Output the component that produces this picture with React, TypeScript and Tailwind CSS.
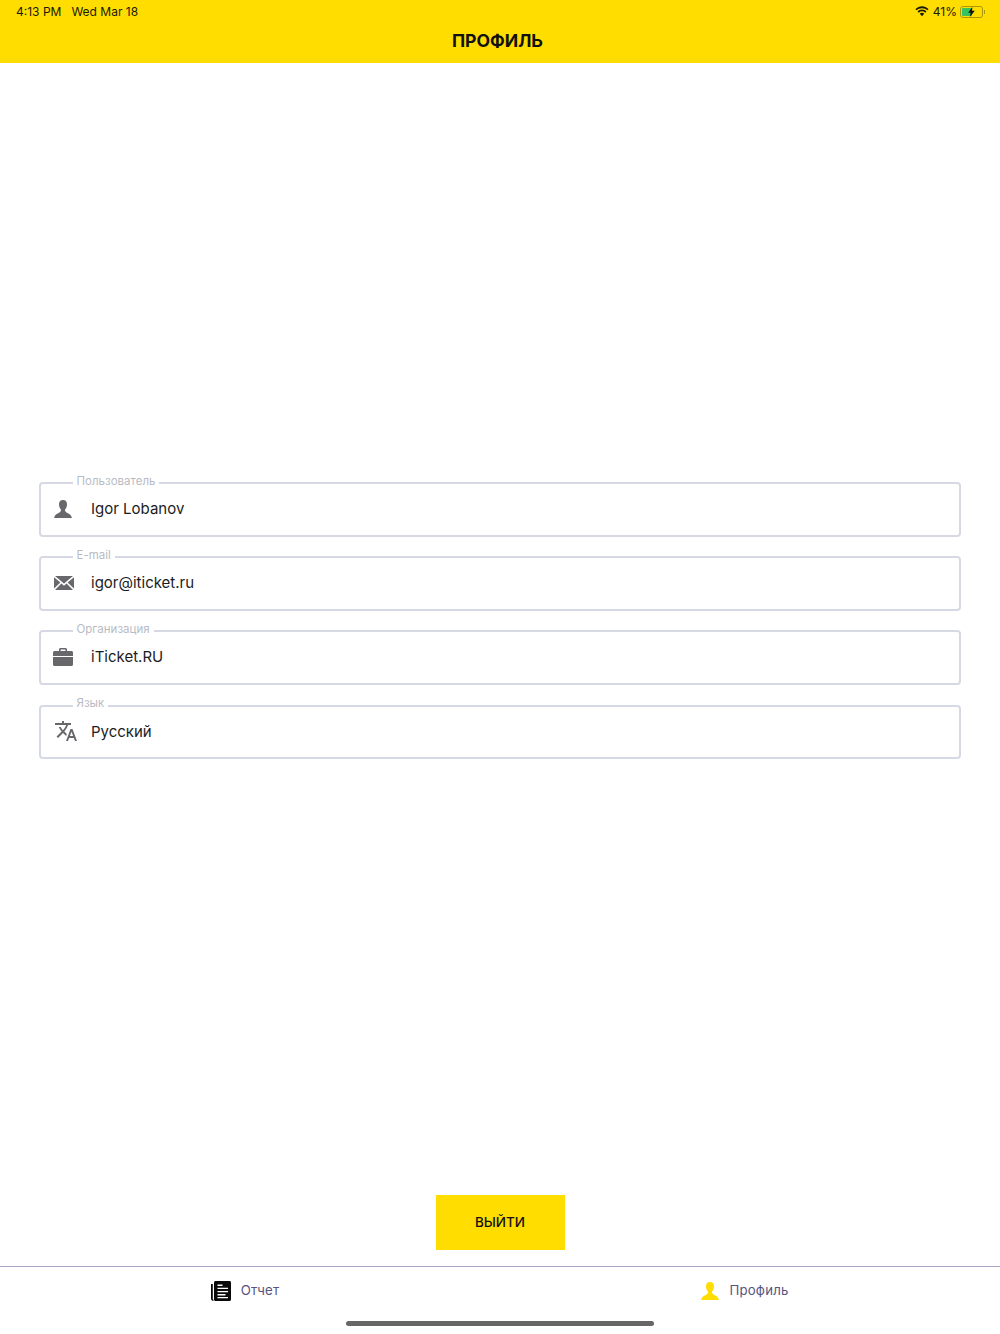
import type { ReactNode } from 'react'
import { MdTranslate } from 'react-icons/md'

function PersonIcon({ className }: { className: string }) {
  return (
    <svg viewBox="0 0 18 18" className={className} fill="currentColor">
      <path d="M9 0C6.500 0 5 1.600 5 4.200c0 2.200.8 3.900 1.700 5 .3.400.4 1 .2 1.600-.3.900-1 1.500-2.300 2.100-1.800.8-3.700 1.800-4.600 5.100h18c-.9-3.300-2.800-4.300-4.600-5.100-1.300-.6-2-1.200-2.300-2.100-.2-.6-.1-1.200.2-1.600.9-1.100 1.700-2.800 1.700-5C13 1.600 11.500 0 9 0z" />
    </svg>
  )
}

function MailIcon() {
  return (
    <svg viewBox="0 0 20 14" className="w-[20px] h-[14px] text-[#67676c] ml-[1px] -mt-[1px]" fill="currentColor">
      <path d="M1 0h18L10 7.600 1 0z" />
      <path d="M0 1.200l6.400 5.400L0 12.600V1.200z" />
      <path d="M20 1.200l-6.400 5.400 6.400 6V1.200z" />
      <path d="M7.400 7.500L10 9.700l2.600-2.200L19 14H1l6.400-6.500z" />
    </svg>
  )
}

function BriefcaseIcon() {
  return (
    <svg viewBox="0 0 20 18" className="w-[20px] h-[18px] text-[#67676c] -mt-[1px]" fill="currentColor">
      <path d="M6 3V1.600C6 .7 6.700 0 7.600 0h4.800c.9 0 1.600.7 1.600 1.600V3h-1.600V1.600H7.600V3H6z" />
      <path d="M1.500 3h17c.8 0 1.500.7 1.500 1.500V8H0V4.500C0 3.700.7 3 1.500 3z" />
      <path d="M0 9h20v7.500c0 .8-.7 1.500-1.500 1.500h-17C.7 18 0 17.300 0 16.500V9z" />
    </svg>
  )
}

function PaperIcon() {
  return (
    <svg viewBox="0 0 20 20" className="w-[20px] h-[20px] text-[#0a0a0a]">
      <path fill="currentColor" d="M4.500 0h14C19.300 0 20 .7 20 1.500v17c0 .8-.7 1.500-1.500 1.500h-14C3.700 20 3 19.300 3 18.500v-17C3 .7 3.700 0 4.500 0z" />
      <path fill="currentColor" d="M0 3h1.800v15c0 .4.300.7.700.7V20C1.100 20 0 18.900 0 17.500V3z" />
      <path fill="#fff" d="M6.500 3.500h5v1.400h-5zM6.500 6.700h10.500v1.400H6.500zM6.500 9.900h10.500v1.400H6.500zM6.500 13.100h8v1.400h-8zM6.500 16h10.500v1.200H6.500z" />
    </svg>
  )
}

function Field({ label, value, icon }: { label: string; value: string; icon: ReactNode }) {
  return (
    <div className="relative h-[54.600px] border-2 border-[#d6d9e4] rounded-[4px] flex items-center">
      <span className="absolute left-[31.500px] -top-[11.500px] bg-white px-[4px] text-[11.500px] leading-[16px] text-[#b9bbc4]">
        {label}
      </span>
      <span className="w-[50px] pl-[12px] flex items-center shrink-0">{icon}</span>
      <span className="text-[15px] text-[#1c1c1e]">{value}</span>
    </div>
  )
}

function TabItem({ icon, label }: { icon: ReactNode; label: string }) {
  return (
    <div className="flex-1 flex items-center justify-center gap-[10px] pr-[10px]">
      {icon}
      <span className="text-[13.200px] tracking-[0.2px] text-[#55557f]">{label}</span>
    </div>
  )
}

export default function App() {
  return (
    <div className="w-[1000px] h-[1334px] bg-white flex flex-col font-['Inter','Noto_Sans',sans-serif]">
      {/* Header with iPad status bar */}
      <header className="h-[63px] bg-[#ffdd00] shrink-0 px-[16px] pt-[4px]">
        <div className="flex items-center justify-between h-[15px] text-[12px] text-[#1b1b00]">
          <div className="flex gap-[10px]">
            <span>4:13 PM</span>
            <span>Wed Mar 18</span>
          </div>
          <div className="flex items-center gap-[4px]">
            <svg viewBox="0 0 16 12" className="w-[14px] h-[11px] ml-[1px]" fill="currentColor">
              <path d="M8 2.200c2.400 0 4.600.9 6.200 2.500l1.300-1.400C13.500 1.300 10.900 0 8 0S2.500 1.300.5 3.300l1.300 1.400C3.400 3.100 5.600 2.200 8 2.200z" />
              <path d="M8 5.800c1.400 0 2.700.5 3.700 1.500L13 5.900C11.700 4.600 9.900 3.800 8 3.800s-3.700.8-5 2.100l1.300 1.400c1-1 2.300-1.500 3.700-1.500z" />
              <path d="M8 7.500c-1 0-1.800.4-2.500 1L8 11.500l2.500-3c-.7-.6-1.500-1-2.500-1z" />
            </svg>
            <span>41%</span>
            <div className="flex items-center -ml-[1px] -mr-[1px]">
              <div className="relative w-[23px] h-[12px] border border-[#a8970c] rounded-[3px] p-[1px]">
                <div className="h-full w-[10px] bg-[#36c25c] rounded-[1px]" />
                <svg viewBox="0 0 8 12" className="absolute left-[7px] top-0 w-[7px] h-[10px] text-[#111]" fill="currentColor">
                  <path d="M5 0L0 7h3l-1 5 6-7.500H4.700L5 0z" />
                </svg>
              </div>
              <div className="w-[1px] h-[4px] bg-[#a8970c] ml-[1px]" />
            </div>
          </div>
        </div>
        <h1 className="mt-[11px] pr-[5px] text-center text-[17.600px] leading-[22px] font-bold text-[#111]">ПРОФИЛЬ</h1>
      </header>

      {/* Form */}
      <main className="flex-1 px-[39px] pt-[419px] flex flex-col">
        <div className="flex flex-col gap-[19.600px]">
          <Field label="Пользователь" value="Igor Lobanov" icon={<PersonIcon className="w-[18px] h-[18px] text-[#67676c] ml-[1px]" />} />
          <Field label="E-mail" value="igor@iticket.ru" icon={<MailIcon />} />
          <Field label="Организация" value="iTicket.RU" icon={<BriefcaseIcon />} />
          <Field label="Язык" value="Русский" icon={<MdTranslate className="w-[24px] h-[24px] text-[#67676c] ml-[1px] -mt-[1px]" />} />
        </div>
        <button className="mt-auto mb-[16px] self-center w-[129px] h-[55px] bg-[#ffdd00] text-[13.500px] font-medium text-[#111]">
          ВЫЙТИ
        </button>
      </main>

      {/* Tab bar */}
      <footer className="h-[68px] shrink-0 border-t border-[#a9a6c6] relative">
        <div className="flex h-[48px]">
          <TabItem icon={<PaperIcon />} label="Отчет" />
          <TabItem icon={<PersonIcon className="w-[18px] h-[18px] text-[#ffdd00]" />} label="Профиль" />
        </div>
        <div className="absolute left-[346px] bottom-[8px] w-[308px] h-[5px] rounded-full bg-[#666666]" />
      </footer>
    </div>
  )
}
